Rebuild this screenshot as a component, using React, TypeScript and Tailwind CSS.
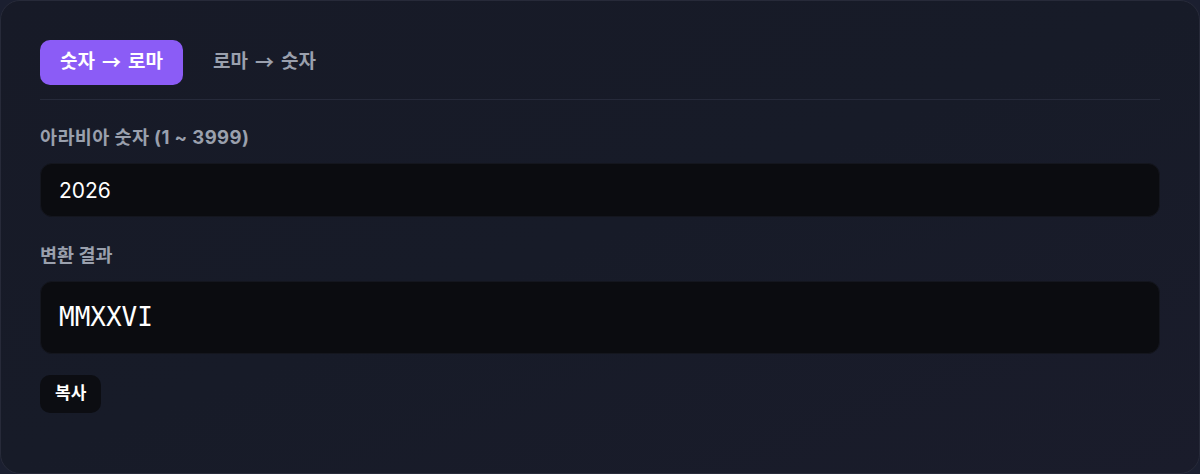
import { useState } from 'react'

const FONT = '"Inter", "Noto Sans CJK KR", sans-serif'

function toRoman(n: number): string {
  const map: [number, string][] = [
    [1000, 'M'], [900, 'CM'], [500, 'D'], [400, 'CD'],
    [100, 'C'], [90, 'XC'], [50, 'L'], [40, 'XL'],
    [10, 'X'], [9, 'IX'], [5, 'V'], [4, 'IV'], [1, 'I'],
  ]
  let out = ''
  for (const [v, s] of map) {
    while (n >= v) {
      out += s
      n -= v
    }
  }
  return out
}

// wide arrow glyph from the CJK face
function Arrow() {
  return <span className="mx-[7px]" style={{ fontFamily: '"Noto Sans CJK KR", sans-serif' }}>→</span>
}

export default function App() {
  const [mode, setMode] = useState<'toRoman' | 'toNumber'>('toRoman')
  const [value, setValue] = useState('2026')
  const num = parseInt(value, 10)
  const result = num >= 1 && num <= 3999 ? toRoman(num) : ''

  const tabClass = (active: boolean) =>
    active
      ? 'flex items-center h-[45px] px-[20px] rounded-[10px] bg-[#8b5cf6] text-white text-[19px] font-bold'
      : 'flex items-center h-[45px] px-[16px] rounded-[10px] text-[#9aa0ad] text-[19px] font-bold'

  return (
    <div className="w-[1200px] h-[474px] bg-[#1b1f30]" style={{ fontFamily: FONT }}>
      <div className="h-full rounded-[20px] border border-[#272a39] bg-gradient-to-br from-[#171a27] via-[#171b28] to-[#1a1c2b] px-[39px] pt-[39px]">
        {/* Tabs */}
        <div className="flex items-center gap-[14px] border-b border-[#262a3a] pb-[14px]">
          <button onClick={() => setMode('toRoman')} className={tabClass(mode === 'toRoman')}>
            숫자<Arrow />로마
          </button>
          <button onClick={() => setMode('toNumber')} className={tabClass(mode === 'toNumber')}>
            로마<Arrow />숫자
          </button>
        </div>

        {/* Input */}
        <div className="mt-[25px] text-[18.5px] font-bold text-[#9aa0ad] leading-[24px] tracking-[0.4px]">
          아라비아 숫자 (1 ~ 3999)
        </div>
        <input
          value={value}
          onChange={(e) => setValue(e.target.value)}
          className="mt-[14px] block w-full h-[54px] rounded-[12px] border border-[#14161e] bg-[#0b0c10] px-[18px] text-[21px] text-white outline-none"
        />

        {/* Result */}
        <div className="mt-[26px] text-[18.5px] font-bold text-[#9aa0ad] leading-[24px]">변환 결과</div>
        <div
          className="mt-[14px] flex items-center h-[73px] rounded-[12px] border border-[#14161e] bg-[#0b0c10] px-[18px] text-[26px] text-white"
          style={{ fontFamily: '"DejaVu Sans Mono", monospace' }}
        >
          {result}
        </div>

        <button className="mt-[21px] h-[38px] px-[15px] rounded-[10px] bg-[#0c0d12] text-white text-[17px] font-bold">
          복사
        </button>
      </div>
    </div>
  )
}
